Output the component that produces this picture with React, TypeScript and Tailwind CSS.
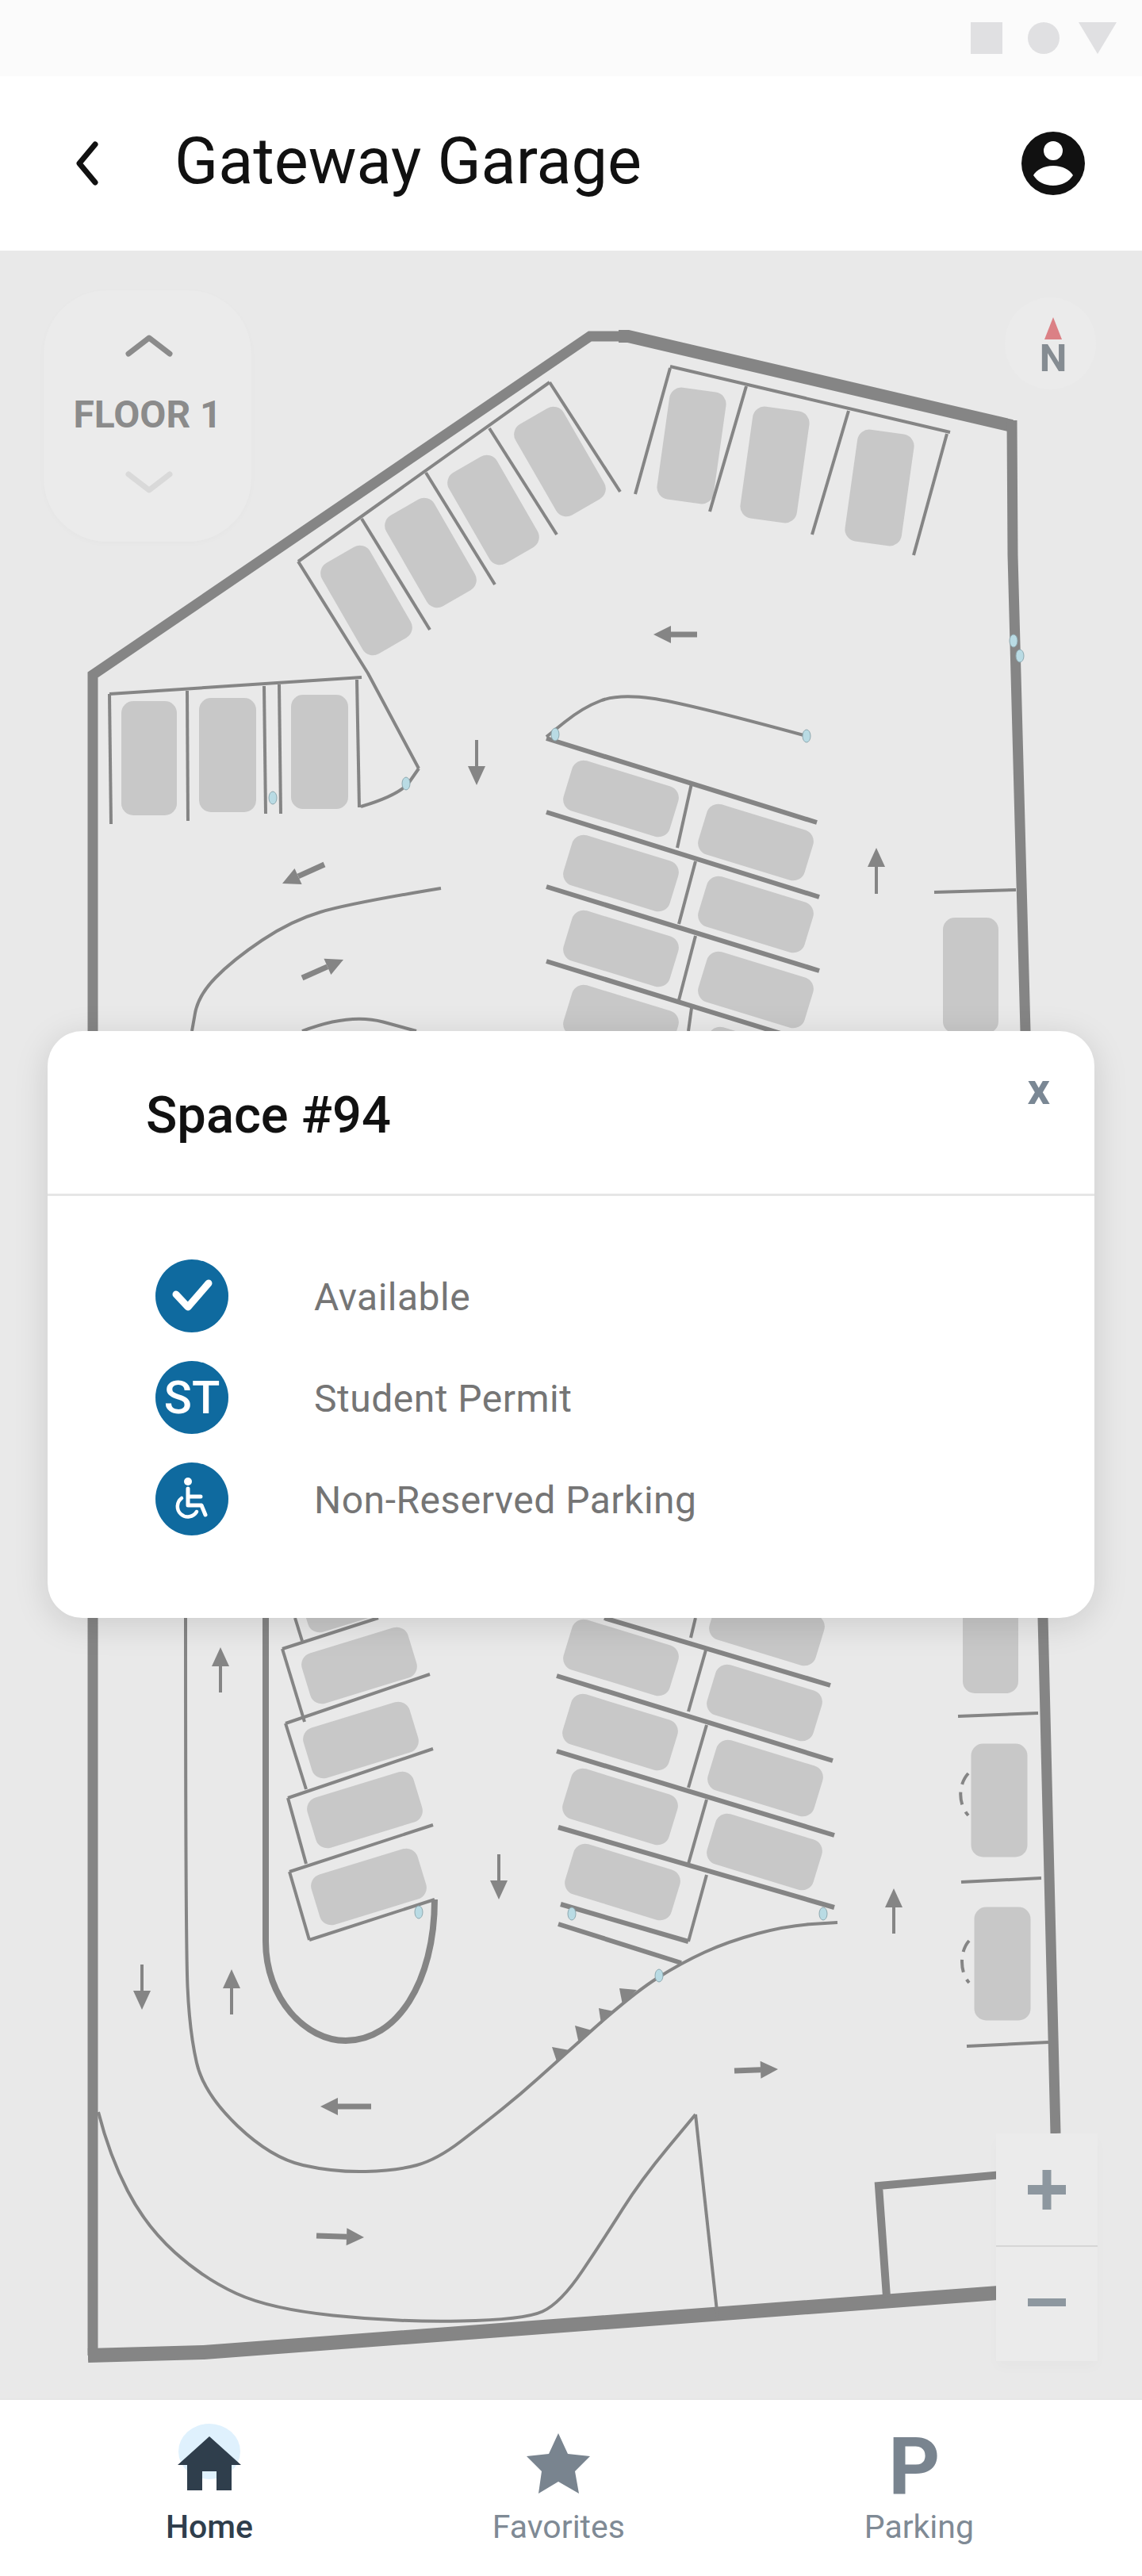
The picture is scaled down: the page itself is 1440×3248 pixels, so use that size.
import { ReactNode } from 'react';

const WALL = '#858585';
const CAR = '#c8c8c8';

// [cx, cy, width, length, angle]
const cars: number[][] = [
    [872, 562, 72, 142, 8], [977, 586, 72, 142, 8], [1109, 615, 72, 142, 8],
    [706, 582, 70, 132, -30], [622, 643, 70, 132, -30], [543, 697, 70, 132, -30], [462, 757, 70, 132, -30],
    [188, 956, 70, 144, 0], [287, 952, 72, 144, 0], [403, 948, 72, 144, 0],
    [783, 1007, 140, 66, 17], [783, 1101, 140, 66, 17], [783, 1196, 140, 66, 17], [783, 1290, 140, 66, 17],
    [953, 1062, 140, 66, 17], [953, 1153, 140, 66, 17], [953, 1248, 140, 66, 17], [955, 1343, 140, 66, 17],
    [1224, 1230, 70, 146, 0],
    [450, 2010, 140, 66, -17], [453, 2100, 140, 66, -17], [455, 2194, 140, 66, -17], [460, 2282, 140, 66, -17], [465, 2379, 140, 66, -17],
    [783, 2090, 140, 66, 17], [782, 2184, 140, 66, 17], [782, 2278, 140, 66, 17], [785, 2373, 140, 66, 17],
    [967, 2052, 140, 66, 17], [964, 2147, 140, 66, 17], [965, 2242, 140, 66, 17], [964, 2335, 140, 66, 17],
    [1249, 2062, 70, 146, 0], [1260, 2270, 71, 143, 0], [1264, 2476, 71, 143, 0],
];

// thin stall lines: x1 y1 x2 y2
const lines: number[][] = [
    [845, 462, 1198, 545], [845, 464, 801, 623], [941, 487, 895, 645], [1070, 518, 1024, 674], [1194, 547, 1152, 700],
    [693, 482, 782, 620], [617, 540, 702, 674], [537, 596, 624, 737], [456, 654, 542, 794], [693, 482, 376, 708],
    [138, 875, 456, 854], [138, 875, 140, 1039], [236, 871, 237, 1035], [333, 865, 335, 1026], [352, 863, 354, 1026], [450, 857, 453, 1018],
    [872, 988, 854, 1069], [877, 1086, 856, 1165], [877, 1180, 856, 1261], [872, 1271, 868, 1300],
    [1178, 1125, 1281, 1122],
    [356, 2079, 477, 2040], [360, 2173, 542, 2111], [363, 2267, 546, 2205], [365, 2360, 546, 2301], [390, 2446, 548, 2395],
    [356, 2079, 384, 2171], [360, 2173, 386, 2256], [363, 2267, 386, 2350], [365, 2360, 390, 2446], [372, 2040, 381, 2069],
    [891, 2077, 868, 2158], [891, 2175, 868, 2254], [891, 2269, 868, 2350], [891, 2364, 868, 2448], [877, 2040, 871, 2065],
    [1208, 2164, 1309, 2160], [1212, 2373, 1313, 2368], [1219, 2580, 1322, 2575],
    [877, 2666, 905, 2923],
];

// the rough double-struck lines between stalls
const heavyLines: number[][] = [
    [689, 931, 1030, 1037], [689, 1024, 1033, 1131], [689, 1118, 1033, 1224], [689, 1212, 1033, 1318],
    [762, 2040, 1047, 2125], [702, 2113, 1050, 2220], [702, 2208, 1052, 2314], [704, 2304, 1052, 2405],
    [707, 2401, 868, 2448], [704, 2426, 859, 2475],
];

// tail x y, tip x y, heavy
const arrows: number[][] = [
    [879, 800, 824, 800, 1], [601, 933, 601, 990, 0], [409, 1090, 356, 1114, 1], [381, 1233, 433, 1210, 1], [1105, 1127, 1105, 1069, 0],
    [278, 2134, 278, 2077, 0], [629, 2338, 629, 2395, 0], [1127, 2438, 1127, 2381, 0], [179, 2477, 179, 2534, 0], [292, 2540, 292, 2483, 0],
    [926, 2611, 981, 2609, 1], [468, 2656, 404, 2656, 1], [399, 2819, 459, 2821, 1],
];

const dots: number[][] = [
    [344, 1006], [512, 988], [700, 926], [1017, 928], [1278, 808], [1286, 827], [528, 2411], [721, 2413], [1038, 2413], [831, 2491],
];

// road edges as point runs, smoothed when drawn
const curves: number[][][] = [
    [[455, 1017], [505, 1002], [528, 969]],
    [[1017, 928], [863, 886], [780, 875], [735, 892], [689, 929]],
    [[556, 1120], [441, 1139], [367, 1161], [294, 1210], [250, 1255], [242, 1300]],
    [[381, 1300], [441, 1277], [525, 1300]],
    [[234, 2040], [234, 2448], [239, 2562], [257, 2640], [342, 2721], [422, 2739], [500, 2737], [551, 2723], [611, 2677], [657, 2640], [698, 2603], [799, 2513], [859, 2475], [918, 2448], [992, 2428], [1056, 2424]],
    [[124, 2663], [138, 2718], [184, 2807], [257, 2873], [340, 2911], [500, 2928], [661, 2925], [707, 2904], [762, 2822], [808, 2749], [877, 2666]],
];

const triangles = [
    '781,2507 803,2509 785,2528', '755,2532 774,2536 758,2552', '725,2554 746,2560 730,2577', '696,2581 718,2585 702,2599',
];

const smooth = (pts: number[][]) => {
    let d = `M${pts[0][0]} ${pts[0][1]}`;
    for (let i = 1; i < pts.length - 1; i++) {
        const mx = (pts[i][0] + pts[i + 1][0]) / 2;
        const my = (pts[i][1] + pts[i + 1][1]) / 2;
        d += ` Q${pts[i][0]} ${pts[i][1]} ${mx} ${my}`;
    }
    const last = pts[pts.length - 1];
    return `${d} L${last[0]} ${last[1]}`;
};

const MapArrow = ({ a }: { a: number[] }) => {
    const [x1, y1, x2, y2, heavy] = a;
    const len = Math.hypot(x2 - x1, y2 - y1);
    const ux = (x2 - x1) / len;
    const uy = (y2 - y1) / len;
    const head = heavy ? 22 : 24;
    const half = 11;
    const bx = x2 - ux * head;
    const by = y2 - uy * head;
    return (
        <g>
            <line x1={x1} y1={y1} x2={bx} y2={by} stroke={WALL} strokeWidth={heavy ? 7 : 4} />
            <polygon points={`${x2},${y2} ${bx - uy * half},${by + ux * half} ${bx + uy * half},${by - ux * half}`} fill={WALL} />
        </g>
    );
};

const GarageMap = () => (
    <svg className="block h-[2708px] w-[1440px]" viewBox="0 316 1440 2708" fill="none">
        {cars.map(([cx, cy, w, l, a], i) => (
            <rect key={i} x={cx - w / 2} y={cy - l / 2} width={w} height={l} rx={15} fill={CAR} transform={`rotate(${a} ${cx} ${cy})`} />
        ))}
        <path d="M111 2970 H117 V851 L744 424 H790" stroke={WALL} strokeWidth={13} />
        <path d="M780 424 H792 L1276 537" stroke={WALL} strokeWidth={16} />
        <path d="M1276 530 L1277 700 L1293 1300 L1315 2040 L1331 2690" stroke={WALL} strokeWidth={13} />
        <path d="M111 2970 L257 2966 L1340 2885" stroke={WALL} strokeWidth={18} />
        <path d="M1118 2896 L1108 2756 L1340 2735" stroke={WALL} strokeWidth={10} />
        <path d="M335 2040 L335 2448 C335 2520 385 2573 436 2573 C500 2573 548 2500 548 2395" stroke={WALL} strokeWidth={8} />
        <path d="M464 849 L376 708 M464 849 L528 969" stroke={WALL} strokeWidth={4} />
        {lines.map(([x1, y1, x2, y2], i) => (
            <line key={i} x1={x1} y1={y1} x2={x2} y2={y2} stroke={WALL} strokeWidth={4} />
        ))}
        {heavyLines.map(([x1, y1, x2, y2], i) => (
            <line key={i} x1={x1} y1={y1} x2={x2} y2={y2} stroke={WALL} strokeWidth={6} />
        ))}
        {curves.map((pts, i) => (
            <path key={i} d={smooth(pts)} stroke={WALL} strokeWidth={4} />
        ))}
        {arrows.map((a, i) => (
            <MapArrow key={i} a={a} />
        ))}
        {triangles.map((p, i) => (
            <polygon key={i} points={p} fill={WALL} />
        ))}
        {dots.map(([x, y], i) => (
            <ellipse key={i} cx={x} cy={y} rx={5} ry={8} fill="#b9dbe4" stroke="#8fa9b0" strokeWidth={1} />
        ))}
        <path d="M1221 2236 C1208 2250 1208 2275 1221 2289 M1222 2447 C1210 2460 1210 2487 1222 2500" stroke={WALL} strokeWidth={4} strokeDasharray="16 10" />
    </svg>
);

const StatusBar = () => (
    <div className="flex h-[96px] items-center justify-end bg-[#fbfbfb] pr-[32px]">
        <svg width="184" height="40" viewBox="0 0 184 40">
            <rect x="0" y="0" width="40" height="40" fill="#e0e0e2" />
            <circle cx="92" cy="20" r="20" fill="#e0e0e2" />
            <polygon points="136,0 184,0 160,40" fill="#e0e0e2" />
        </svg>
    </div>
);

const Header = () => (
    <header className="flex h-[220px] items-center bg-white pl-[96px] pr-[72px]">
        <svg width="28" height="56" viewBox="0 0 28 56" fill="none">
            <path d="M24 4 L4 28 L24 52" stroke="#111111" strokeWidth={7} strokeLinecap="round" strokeLinejoin="round" />
        </svg>
        <h1 className="-mt-[4px] ml-[96px] flex-1 font-['Roboto',sans-serif] text-[81px] leading-[100px] text-[#111111]">Gateway Garage</h1>
        <svg width="80" height="80" viewBox="0 0 80 80">
            <path
                fillRule="evenodd"
                fill="#111111"
                d="M40 0a40 40 0 1 0 0 80a40 40 0 1 0 0-80Zm0 12a12 12 0 1 1 0 24a12 12 0 1 1 0-24Zm0 31c12 0 21 5 25 12c-5 8-14 13-25 13s-20-5-25-13c4-7 13-12 25-12Z"
            />
        </svg>
    </header>
);

const FloorPicker = () => (
    <div className="absolute left-[55px] top-[50px] flex h-[317px] w-[262px] flex-col items-center rounded-[80px] bg-[#ebebeb] pt-[56px] shadow-[0_2px_8px_rgba(0,0,0,0.02)]">
        <svg className="ml-[3px]" width="60" height="28" viewBox="0 0 60 28" fill="none">
            <path d="M4 24 L30 4 L56 24" stroke="#8b8b8b" strokeWidth={7} strokeLinecap="round" strokeLinejoin="round" />
        </svg>
        <span className="mt-[46px] font-['Roboto',sans-serif] text-[48px] font-bold leading-[54px] text-[#8b8b8b]">FLOOR 1</span>
        <svg className="ml-[3px] mt-[44px]" width="60" height="28" viewBox="0 0 60 28" fill="none">
            <path d="M4 4 L30 24 L56 4" stroke="#d9d9d9" strokeWidth={7} strokeLinecap="round" strokeLinejoin="round" />
        </svg>
    </div>
);

const Compass = () => (
    <div className="absolute left-[1267px] top-[59px] flex h-[116px] w-[115px] flex-col items-center rounded-full bg-[#ebebeb] pl-[7px] pt-[25px]">
        <svg width="22" height="28" viewBox="0 0 22 28">
            <polygon points="11,0 22,28 0,28" fill="#db8085" />
        </svg>
        <span className="font-['Roboto',sans-serif] text-[49px] font-bold leading-[48px] text-[#858c92]">N</span>
    </div>
);

const ZoomControl = () => (
    <div className="absolute left-[1256px] top-[2374px] flex h-[287px] w-[128px] flex-col bg-[#ebebeb] shadow-[0_8px_16px_rgba(0,0,0,0.02)]">
        <div className="flex h-[143px] items-center justify-center border-b-2 border-[#d6d6d6]">
            <svg width="48" height="50" viewBox="0 0 48 50">
                <path d="M0 19H18.500V0H29.500V19H48V31H29.500V50H18.500V31H0Z" fill="#8d979f" />
            </svg>
        </div>
        <div className="flex flex-1 items-center justify-center pb-[4px]">
            <div className="h-[10px] w-[48px] bg-[#8d979f]" />
        </div>
    </div>
);

const Badge = ({ children }: { children: ReactNode }) => (
    <div className="flex h-[92px] w-[92px] items-center justify-center rounded-full bg-[#0f6a9f] font-['Roboto',sans-serif] text-[58px] font-medium text-white">
        {children}
    </div>
);

const InfoRow = ({ icon, label }: { icon: ReactNode; label: string }) => (
    <div className="flex items-center gap-[108px]">
        <Badge>{icon}</Badge>
        <span className="pt-[3px] font-['Roboto',sans-serif] text-[48px] leading-[56px] tracking-[0.5px] text-[#757575]">{label}</span>
    </div>
);

const SpaceCard = () => (
    <div className="absolute left-[60px] top-[984px] h-[740px] w-[1320px] rounded-[44px] bg-white shadow-[0_8px_44px_rgba(0,0,0,0.13)]">
        <div className="relative flex h-[208px] items-center border-b-[3px] border-[#e6e6e6] pl-[124px] pt-[6px]">
            <h2 className="font-['Roboto',sans-serif] text-[65px] font-medium leading-[76px] text-[#111111]">Space #94</h2>
            <span className="absolute right-[56px] top-[40px] font-['Roboto',sans-serif] text-[56px] font-bold leading-[66px] text-[#7a8794]">x</span>
        </div>
        <div className="flex flex-col gap-[36px] pl-[136px] pt-[80px]">
            <InfoRow
                label="Available"
                icon={
                    <svg width="92" height="92" viewBox="0 0 92 92" fill="none">
                        <path d="M26 44 L41 60 L67 30" stroke="white" strokeWidth={9} strokeLinecap="round" strokeLinejoin="round" />
                    </svg>
                }
            />
            <InfoRow label="Student Permit" icon="ST" />
            <InfoRow
                label="Non-Reserved Parking"
                icon={
                    <svg width="92" height="92" viewBox="0 0 92 92" fill="none">
                        <circle cx="41" cy="24" r="5" fill="white" />
                        <path d="M41 33 V54 H58 L63 66 M41 43 H57" stroke="white" strokeWidth={5} strokeLinejoin="round" strokeLinecap="round" />
                        <path d="M33 45 A13 13 0 1 0 52 62" stroke="white" strokeWidth={4.500} strokeLinecap="round" />
                    </svg>
                }
            />
        </div>
    </div>
);

const NavItem = ({ icon, label, active }: { icon: ReactNode; label: string; active?: boolean }) => (
    <div className="flex flex-col items-center">
        <div className="flex h-[90px] justify-center">{icon}</div>
        <span className={`mt-[16px] font-['Roboto',sans-serif] text-[41px] leading-[48px] ${active ? 'font-medium text-[#2f3e4c]' : 'text-[#7f8a95]'}`}>{label}</span>
    </div>
);

const BottomNav = () => (
    <nav className="flex h-[224px] justify-between border-t-2 border-[#e6e6e6] bg-white pl-[209px] pr-[212px] pt-[30px]">
        <NavItem
            active
            label="Home"
            icon={
                <svg width="80" height="88" viewBox="0 0 80 88">
                    <ellipse cx="40" cy="35" rx="39" ry="35" fill="#dff1fd" />
                    <path d="M40 16 L80 52 H68 V84 H49 V60 H31 V84 H12 V52 H0 Z" fill="#2f3e4c" />
                </svg>
            }
        />
        <NavItem
            label="Favorites"
            icon={
                <svg className="mt-[12px]" width="80" height="76" viewBox="0 0 80 76">
                    <polygon points="40,0 52,26 80,29 61,48 66,76 40,61 15,76 19,48 0,29 28,26" fill="#79848f" />
                </svg>
            }
        />
        <NavItem
            label="Parking"
            icon={<span className="-ml-[12px] font-['Roboto',sans-serif] text-[101px] font-bold leading-[108px] text-[#79848f]">P</span>}
        />
    </nav>
);

const App = () => {
    return (
        <div className="flex w-[1440px] flex-col overflow-hidden">
            <StatusBar />
            <Header />
            <main className="relative h-[2708px] bg-[#e9e9e9]">
                <GarageMap />
                <FloorPicker />
                <Compass />
                <ZoomControl />
                <SpaceCard />
            </main>
            <BottomNav />
        </div>
    );
};

export default App;
